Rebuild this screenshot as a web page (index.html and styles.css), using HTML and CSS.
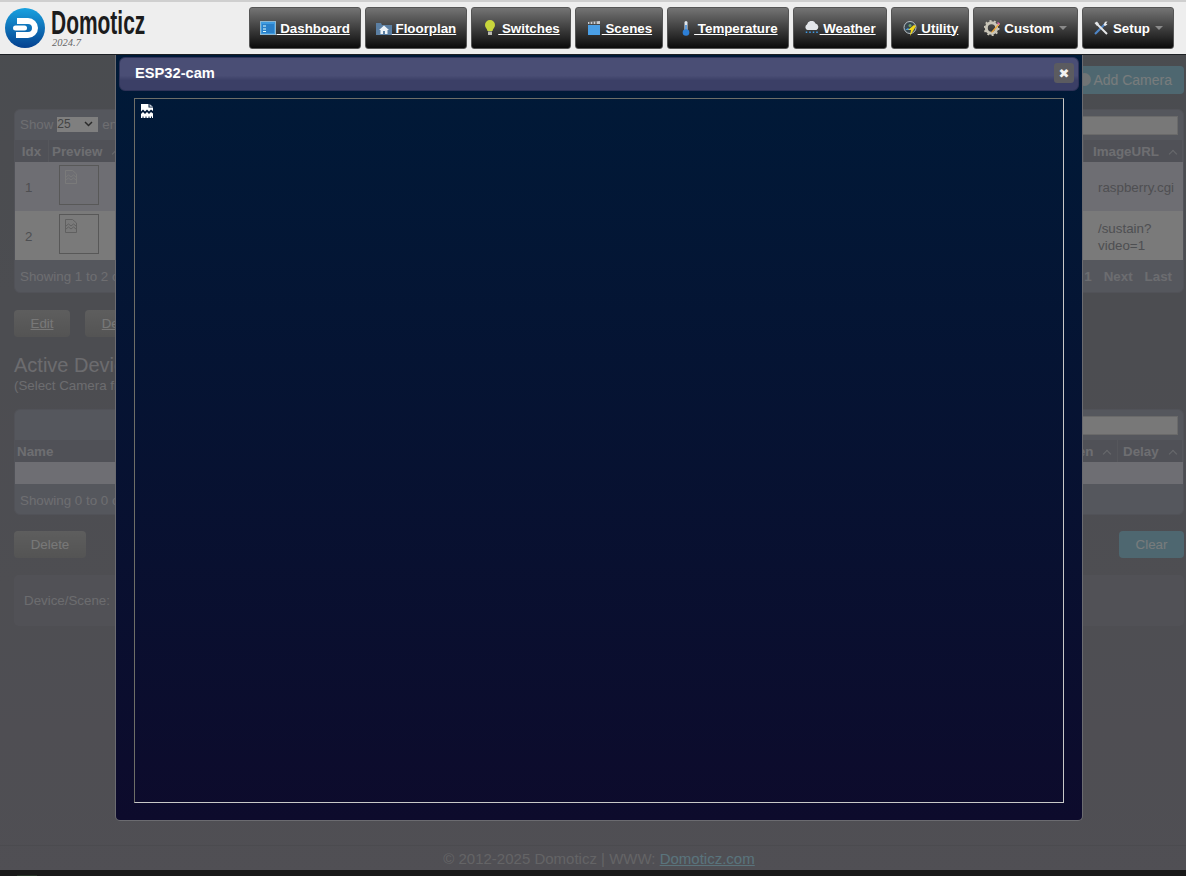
FILE: index.html
```html
<!DOCTYPE html>
<html lang="en">
<head>
    <meta charset="UTF-8">
    <meta name="viewport" content="width=device-width, initial-scale=1.0">
    <title>Domoticz</title>
    <link rel="stylesheet" href="styles.css">
</head>
<body>
    <header class="topbar">
        <div class="logo">
            <svg class="logo-mark" width="40" height="40" viewBox="0 0 40 40">
                <defs>
                    <linearGradient id="logoBlue" x1="0" y1="0" x2="0" y2="1">
                        <stop offset="0" stop-color="#19a2e0"/>
                        <stop offset="1" stop-color="#04408f"/>
                    </linearGradient>
                </defs>
                <circle cx="20" cy="20" r="20" fill="url(#logoBlue)"/>
                <path d="M12 10h11a10 10 0 0 1 0 20H11v-6h12a4 4 0 0 0 0-8H12z" fill="#fff"/>
                <rect x="8" y="17.5" width="14" height="5" rx="2.5" fill="#fff"/>
            </svg>
            <div class="logo-words">
                <span class="logo-name">Domoticz</span>
                <span class="logo-version">2024.7</span>
            </div>
        </div>
        <nav class="nav">
            <a class="nav-btn" href="#">
                <svg width="16" height="14" viewBox="0 0 16 14"><rect x=".5" y=".5" width="15" height="13" fill="#3f9be0" stroke="#8fb6cf"/><rect x="2" y="3" width="12" height="9" fill="#2a7fc8"/><path d="M3 5h3M3 8h3M3 10.500h3" stroke="#dff" stroke-width="1"/></svg>
                <span class="nav-label">&nbsp;Dashboard</span>
            </a>
            <a class="nav-btn" href="#">
                <svg width="16" height="14" viewBox="0 0 16 14"><path d="M0 2h5l1 2h10v10H0z" fill="#5b7fa3"/><path d="M8 4.500l5 4.500h-1.500v4h-7V9H3z" fill="#eef3f7"/><rect x="7" y="10" width="2" height="3" fill="#5b7fa3"/></svg>
                <span class="nav-label">&nbsp;Floorplan</span>
            </a>
            <a class="nav-btn" href="#">
                <svg width="16" height="16" viewBox="0 0 10 16"><path d="M5 0a5 5 0 0 1 5 5c0 2.500-2 3.500-2.500 6h-5C2 8.500 0 7.500 0 5a5 5 0 0 1 5-5z" fill="#c8d63c"/><rect x="3" y="11.500" width="4" height="3.500" fill="#b9b9b0"/></svg>
                <span class="nav-label">&nbsp;Switches</span>
            </a>
            <a class="nav-btn" href="#">
                <svg width="16" height="14" viewBox="0 0 12 14"><rect y="4" width="12" height="10" fill="#4a9fe6"/><path d="M0 1l12-1v3H0z" fill="#c9ccd0"/><path d="M2 .8v2.200M5 .6v2.400M8 .3v2.700" stroke="#333" stroke-width="1"/></svg>
                <span class="nav-label">&nbsp;Scenes</span>
            </a>
            <a class="nav-btn" href="#">
                <svg width="16" height="15" viewBox="0 0 8 15"><rect x="2.500" y="0" width="3" height="10" rx="1.500" fill="#dfe6ee"/><rect x="3.300" y="4" width="1.400" height="7" fill="#2d7fd6"/><circle cx="4" cy="11.500" r="3.300" fill="#2d7fd6"/></svg>
                <span class="nav-label">&nbsp;Temperature</span>
            </a>
            <a class="nav-btn" href="#">
                <svg width="16" height="14" viewBox="0 0 15 14"><path d="M3 9a3 3 0 0 1-.5-5.500A4.500 4.500 0 0 1 11 2.500 3.500 3.500 0 0 1 12 9z" fill="#e3e6ea"/><path d="M2 10.500v2M5.500 10.500v2M9 10.500v2M12.500 10.500v2" stroke="#3c9be8" stroke-width="1.500" stroke-dasharray="1.500 1"/></svg>
                <span class="nav-label">&nbsp;Weather</span>
            </a>
            <a class="nav-btn" href="#">
                <svg width="16" height="15" viewBox="0 0 14 15"><circle cx="7" cy="6.500" r="6" fill="#39474f" stroke="#b7c0c6"/><path d="M2 9l3-2 2 2z" fill="#4b9fe0"/><path d="M11 4l2 1-6 10 1-6-3 0z" fill="#f1d619"/><circle cx="7" cy="4.500" r="1.500" fill="#6fa06a"/></svg>
                <span class="nav-label">&nbsp;Utility</span>
            </a>
            <a class="nav-btn" href="#">
                <svg width="16" height="16" viewBox="0 0 16 16"><circle cx="7.500" cy="8" r="5.200" fill="none" stroke="#c9c5b8" stroke-width="3"/><circle cx="7.500" cy="8" r="7" fill="none" stroke="#c9c5b8" stroke-width="2" stroke-dasharray="2 2.400"/><path d="M15 3l1 1-7 8-2 1 1-2z" fill="#eda63b"/><path d="M14 2l2 2-1 1-2-2z" fill="#d96bb0"/></svg>
                <span class="nav-label-plain">Custom</span>
                <span class="caret"></span>
            </a>
            <a class="nav-btn" href="#">
                <svg width="16" height="14" viewBox="0 0 14 14"><path d="M1 13L11 3" stroke="#4f86c6" stroke-width="2.200"/><path d="M13 13L3.500 3.500" stroke="#e6e8ea" stroke-width="2"/><path d="M.5 2L3 .5 5 3 3 5z" fill="#e6e8ea"/><path d="M9.500 4L11 .8 13.500 .5 12 2.500 13.500 3.500 11 5z" fill="#e6e8ea"/></svg>
                <span class="nav-label-plain">Setup</span>
                <span class="caret"></span>
            </a>
        </nav>
    </header>

    <main class="content">
        <div class="top-actions">
            <a class="btn btn-teal btn-add" href="#"><span class="add-dot"></span>Add Camera</a>
        </div>

        <section class="dt-wrap">
            <div class="dt-toolbar">
                <label class="dt-length">Show <span class="fake-select">25<svg width="9" height="6" viewBox="0 0 9 6"><path d="M1 1l3.500 3.500L8 1" fill="none" stroke="#555" stroke-width="1.500"/></svg></span> entries</label>
                <input class="dt-search" type="text">
            </div>
            <table class="dt cams">
                <thead>
                    <tr>
                        <th class="col-idx">Idx</th>
                        <th class="col-preview">Preview <span class="sort"></span></th>
                        <th>Name</th>
                        <th class="col-url">ImageURL <span class="sort sort-far"></span></th>
                    </tr>
                </thead>
                <tbody>
                    <tr class="row-odd">
                        <td class="cell-idx">1</td>
                        <td class="cell-thumb"><div class="thumb"><svg class="broken-small" width="12" height="14" viewBox="0 0 12 14"><path d="M.5.500h7l4 3.500v9.500H.5z"/><path d="M1 7l2.500-2L6 7l2.500-2L11 7M1 10l2.500-2L6 10l2.500-2L11 10"/></svg></div></td>
                        <td>Raspberry</td>
                        <td class="cell-url">raspberry.cgi</td>
                    </tr>
                    <tr class="row-even">
                        <td class="cell-idx">2</td>
                        <td class="cell-thumb"><div class="thumb"><svg class="broken-small" width="12" height="14" viewBox="0 0 12 14"><path d="M.5.500h7l4 3.500v9.500H.5z"/><path d="M1 7l2.500-2L6 7l2.500-2L11 7M1 10l2.500-2L6 10l2.500-2L11 10"/></svg></div></td>
                        <td>ESP32-cam</td>
                        <td class="cell-url">/sustain?<br>video=1</td>
                    </tr>
                </tbody>
            </table>
            <div class="dt-footer">
                <span>Showing 1 to 2 of 2 entries</span>
                <div class="pager"><span>1</span><span>Next</span><span>Last</span></div>
            </div>
        </section>

        <div class="cam-actions">
            <a class="btn btn-grey btn-edit" href="#">Edit</a>
            <a class="btn btn-grey btn-del" href="#">Delete</a>
        </div>

        <h2 class="section-title">Active Devices</h2>
        <p class="section-sub">(Select Camera from above)</p>

        <section class="dt-wrap dt-wrap-devices">
            <div class="dt-toolbar dt-toolbar-tall">
                <input class="dt-search" type="text">
            </div>
            <table class="dt devices">
                <thead>
                    <tr>
                        <th>Name</th>
                        <th class="col-when">When <span class="sort"></span></th>
                        <th class="col-delay">Delay <span class="sort sort-far"></span></th>
                    </tr>
                </thead>
                <tbody>
                    <tr class="row-odd row-empty"><td colspan="3"></td></tr>
                </tbody>
            </table>
            <div class="dt-footer dt-footer-short">
                <span>Showing 0 to 0 of 0 entries</span>
            </div>
        </section>

        <div class="device-actions">
            <span class="btn btn-grey btn-delete">Delete</span>
            <span class="btn btn-teal btn-clear">Clear</span>
        </div>

        <div class="device-form">Device/Scene:</div>

        <footer class="page-footer">
            &copy; 2012-2025 Domoticz | WWW: <a href="#">Domoticz.com</a>
        </footer>
        <div class="bottom-bar"><div class="bottom-tab"></div></div>
    </main>

    <div class="overlay"></div>

    <div class="dialog">
        <div class="dialog-title">
            <span>ESP32-cam</span>
            <button class="dialog-close">&#10006;</button>
        </div>
        <div class="dialog-frame">
            <svg width="12" height="14" viewBox="0 0 12 14"><path d="M0 0h7.500v3.500H12V7L10 5.500 8 7.500 6 5.500 4 7.500 2 5.500 0 7.500z" fill="#fff"/><path d="M8.500 0L12 2.800H8.500z" fill="#c9d0da"/><path d="M0 10l2-2 2 2 2-2 2 2 2-2 2 1.500V14H0z" fill="#fff"/><path d="M2 14v-1.500M5 14v-1.500M8 14v-1.500M10.500 14v-1.500" stroke="#001a38"/></svg>
        </div>
    </div>
</body>
</html>
```

FILE: styles.css
```css
* {
    margin: 0;
    padding: 0;
    box-sizing: border-box;
}

body {
    font-family: "Liberation Sans", Arial, sans-serif;
    height: 876px;
    overflow: hidden;
    position: relative;
    background: linear-gradient(#94989f, #a09ea8);
    color: #dcdde2;
    font-size: 13.33px;
}

a {
    color: inherit;
}

/* Top bar */
.topbar {
    position: relative;
    z-index: 2;
    height: 55px;
    display: flex;
    justify-content: space-between;
    background: #eee;
    border-top: 2px solid #cfcfcf;
    border-bottom: 1px solid #1d2024;
}

.logo {
    display: flex;
    gap: 6px;
    padding: 6px 0 0 5px;
}

.logo-words {
    display: flex;
    flex-direction: column;
}

.logo-name {
    font-size: 33px;
    font-weight: bold;
    line-height: 30px;
    color: #1c1c1c;
    transform: scaleX(0.635);
    transform-origin: left center;
    width: 94px;
    white-space: nowrap;
}

.logo-version {
    font-family: "Liberation Serif", serif;
    font-style: italic;
    font-size: 10.5px;
    color: #666;
    line-height: 10px;
    padding-left: 1px;
}

.nav {
    display: flex;
    gap: 4px;
    padding: 5px 12px 0 0;
}

.nav-btn {
    height: 42px;
    display: flex;
    align-items: center;
    justify-content: center;
    padding: 0 10px;
    color: #fff;
    font-size: 13.33px;
    font-weight: bold;
    text-decoration: none;
    background: linear-gradient(#747474, #0b0b0b);
    border: 1px solid #555;
    border-radius: 3px;
}

.nav-btn svg {
    width: 16px;
}

.nav-label {
    text-decoration: underline;
}

.nav-label-plain {
    margin-left: 4px;
}

.caret {
    width: 0;
    height: 0;
    margin-left: 5px;
    border-left: 4px solid transparent;
    border-right: 4px solid transparent;
    border-top: 4px solid #8a8a8a;
}

/* Page behind the dialog */
.content {
    height: 821px;
    display: flex;
    flex-direction: column;
    padding: 0 2px 0 14px;
}

.top-actions {
    display: flex;
    justify-content: flex-end;
    padding-top: 11px;
    height: 54px;
}

.btn {
    display: flex;
    align-items: center;
    justify-content: center;
    height: 28px;
    font-size: 13.33px;
    border-radius: 4px;
    color: #f0f0f0;
}

.btn-teal {
    background: #9ccfe0;
    color: #f0f8fa;
}

.btn-grey {
    background: linear-gradient(#bcbcbc, #a8a8a8);
}

.btn-add {
    width: 109px;
    font-size: 14px;
    justify-content: flex-end;
    padding-right: 12px;
    position: relative;
    text-decoration: none;
}

.add-dot {
    position: absolute;
    left: 3px;
    top: 7px;
    width: 13px;
    height: 13px;
    border-radius: 50%;
    background: #e0e8ea;
}

.dt-wrap {
    height: 184px;
    background: #abaebb;
    border-radius: 6px;
    border: 1px solid #a2a5b0;
    display: flex;
    flex-direction: column;
}

.dt-toolbar {
    height: 30px;
    display: flex;
    align-items: center;
    justify-content: space-between;
    padding: 0 5px;
    flex-shrink: 0;
}

.dt-toolbar-tall {
    justify-content: flex-end;
}

.dt-length {
    font-size: 13.33px;
    display: flex;
    align-items: center;
    gap: 4px;
    color: #dcdde2;
    margin-top: -2px;
}

.fake-select {
    width: 41px;
    height: 15px;
    background: #fff;
    color: #888;
    font-size: 12px;
    line-height: 15px;
    display: flex;
    align-items: center;
    justify-content: space-between;
    padding-right: 5px;
}

.dt-search {
    width: 310px;
    height: 19px;
    background: #f0f0f0;
    border: 1px solid #d4d4d4;
}

.dt {
    width: 100%;
    table-layout: fixed;
    border-collapse: separate;
    border-spacing: 0;
    flex-shrink: 0;
}

.dt th {
    height: 22px;
    background: #a0a3af;
    color: #dcdde2;
    font-size: 13.33px;
    text-align: left;
    padding-left: 2px;
    border-right: 1px solid #acaeb8;
    white-space: nowrap;
}

.dt .col-idx {
    width: 34px;
    text-align: center;
    padding-left: 0;
}

.dt .col-preview {
    width: 120px;
    padding-left: 3px;
}

.dt .col-url {
    width: 99px;
    padding-left: 9px;
}

.dt .col-when {
    width: 120px;
    text-align: right;
    padding-right: 7px;
}

.dt .col-delay {
    width: 65px;
    padding-left: 5px;
}

.sort {
    display: inline-block;
    width: 6px;
    height: 6px;
    margin-left: 7px;
    vertical-align: -1px;
    border-left: 1.5px solid #d0d2d8;
    border-top: 1.5px solid #d0d2d8;
    transform: rotate(45deg);
}

.dt .sort-far {
    margin-left: 8px;
}

.dt td {
    height: 49px;
    padding-top: 4px;
    color: #9c9ea4;
    font-size: 13.33px;
    line-height: 16.5px;
}

.row-odd {
    background: #dcdde6;
}

.row-even {
    background: #f4f4f4;
}

.dt .row-empty td {
    height: 22px;
    padding-top: 0;
}

.dt .cell-idx {
    padding-left: 10px;
}

.dt .cell-thumb {
    vertical-align: top;
    padding-top: 3px;
}

.dt .cell-url {
    padding-left: 14px;
}

.thumb {
    width: 40px;
    height: 40px;
    margin-left: 10px;
    border: 1px solid #b0b0b0;
    padding: 4px 5px;
}

.broken-small {
    display: block;
    fill: none;
}

.row-odd .broken-small {
    stroke: #f4f4f4;
}

.row-even .broken-small {
    stroke: #c0c0c0;
}

.dt-footer {
    flex: 1;
    display: flex;
    align-items: center;
    justify-content: space-between;
    padding: 1px 5px 0;
    color: #dcdde2;
}

.pager {
    display: flex;
    gap: 12px;
    padding-right: 6px;
    font-weight: bold;
    color: #d8dae0;
}

.cam-actions {
    display: flex;
    gap: 15px;
    margin-top: 17px;
}

.btn-edit {
    width: 56px;
    height: 27px;
    text-decoration: underline;
}

.btn-del {
    width: 72px;
    height: 27px;
    text-decoration: underline;
}

.section-title {
    font-size: 20px;
    font-weight: normal;
    line-height: 23px;
    margin-top: 17px;
    color: #d8d9de;
}

.section-sub {
    font-size: 13.33px;
    line-height: 15px;
    margin-top: 1px;
    color: #d8d9de;
}

.dt-wrap-devices {
    height: 106px;
    margin-top: 16px;
}

.dt-footer-short {
    justify-content: flex-start;
    padding-top: 3px;
}

.device-actions {
    display: flex;
    justify-content: space-between;
    margin-top: 16px;
}

.btn-delete {
    width: 72px;
    height: 27px;
}

.btn-clear {
    width: 65px;
    height: 27px;
}

.device-form {
    height: 51px;
    margin-top: 17px;
    padding: 18px 10px 0;
    background: #a3a3ad;
    color: #d8d9de;
    border-radius: 5px;
}

.page-footer {
    margin-top: auto;
    height: 25px;
    margin-left: -14px;
    margin-right: -2px;
    padding-left: 12px;
    border-top: 1px solid #96969e;
    text-align: center;
    font-size: 15px;
    line-height: 25px;
    color: #c8c8cc;
    flex-shrink: 0;
}

.page-footer a {
    color: #b4e8f8;
}

.bottom-bar {
    height: 6px;
    margin-left: -14px;
    margin-right: -2px;
    padding: 5px 0 0 17px;
    background: #333;
    flex-shrink: 0;
}

.bottom-tab {
    width: 20px;
    height: 1px;
    background: #4c644c;
}

.overlay {
    position: absolute;
    inset: 0;
    z-index: 1;
    background: rgba(0, 0, 0, 0.5);
}

/* Camera dialog */
.dialog {
    position: absolute;
    z-index: 3;
    left: 115px;
    top: 55px;
    width: 968px;
    height: 766px;
    padding: 2px 3px 0 3px;
    background: linear-gradient(#001a38, #0d0b2c);
    border: 1px solid #6b6b70;
    border-top: none;
    border-radius: 0 0 5px 5px;
}

.dialog-title {
    height: 34px;
    display: flex;
    align-items: center;
    justify-content: space-between;
    padding: 0 4px 2px 15px;
    color: #fff;
    font-size: 14.67px;
    font-weight: bold;
    border: 1px solid #2f3358;
    border-radius: 6px;
    background: linear-gradient(#4a4e75 55%, #3b3f66 70%);
}

.dialog-close {
    width: 20px;
    height: 20px;
    border: none;
    border-radius: 3px;
    background: #5b5b60;
    color: #f2f2f2;
    font-size: 13px;
    font-family: "DejaVu Sans", sans-serif;
}

.dialog-frame {
    height: 705px;
    margin: 7px 15px 0 15px;
    padding: 5px 6px;
    border: 1px solid;
    border-color: #6e6e68 #c8c8c8 #c8c8c8 #6e6e68;
}

.dialog-frame svg {
    display: block;
}
```
